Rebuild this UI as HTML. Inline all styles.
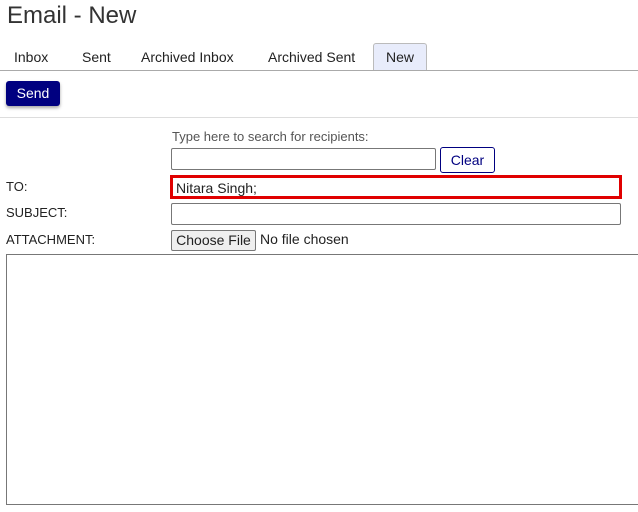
<!DOCTYPE html>
<html><head><style>
body{margin:0;width:638px;height:512px;overflow:hidden;background:#fff;font-family:"Liberation Sans",sans-serif;position:relative;color:#222}
.a{position:absolute;white-space:nowrap}
.tab{font-size:14px;top:49px;color:#222}
.lbl{font-size:13px;color:#222}
</style></head><body>
<div class="a" style="left:7px;top:2px;font-size:24px;color:#333">Email - New</div>
<div class="a" style="left:373px;top:43px;width:52px;height:27px;background:#e8ecfb;border:1px solid #bbb;border-bottom:none;border-radius:3px 3px 0 0"></div>
<div class="a tab" style="left:14px">Inbox</div>
<div class="a tab" style="left:82px">Sent</div>
<div class="a tab" style="left:141px">Archived Inbox</div>
<div class="a tab" style="left:268px">Archived Sent</div>
<div class="a tab" style="left:386px">New</div>
<div class="a" style="left:0;top:70px;width:638px;height:1px;background:#aaa"></div>
<div class="a" style="left:6px;top:81px;width:54px;height:25px;background:#000080;border-radius:3px;box-shadow:0 2px 3px rgba(0,0,0,.35);color:#fff;font-size:14px;line-height:25px;text-align:center">Send</div>
<div class="a" style="left:0;top:117px;width:638px;height:1px;background:#ddd"></div>
<div class="a" style="left:172px;top:129px;font-size:13px;color:#555">Type here to search for recipients:</div>
<div class="a" style="left:171px;top:148px;width:263px;height:20px;border:1px solid #777;border-radius:2px"></div>
<div class="a" style="left:440px;top:147px;width:53px;height:24px;border:1px solid #000080;border-radius:3px;color:#000080;font-size:14px;line-height:24px;text-align:center">Clear</div>
<div class="a lbl" style="left:6px;top:179px">TO:</div>
<div class="a" style="left:170px;top:175px;width:446px;height:18px;border:3px solid #e00000"></div>
<div class="a" style="left:176px;top:180px;font-size:14px;color:#222">Nitara Singh;</div>
<div class="a lbl" style="left:6px;top:205px">SUBJECT:</div>
<div class="a" style="left:171px;top:203px;width:448px;height:20px;border:1px solid #777;border-radius:2px"></div>
<div class="a lbl" style="left:6px;top:232px">ATTACHMENT:</div>
<div class="a" style="left:171px;top:230px;width:83px;height:19px;border:1px solid #777;border-radius:2px;background:#efefef;font-size:14px;line-height:19px;text-align:center">Choose File</div>
<div class="a" style="left:260px;top:231px;font-size:14px">No file chosen</div>
<div class="a" style="left:6px;top:254px;width:640px;height:249px;border:1px solid #777"></div>
</body></html>
